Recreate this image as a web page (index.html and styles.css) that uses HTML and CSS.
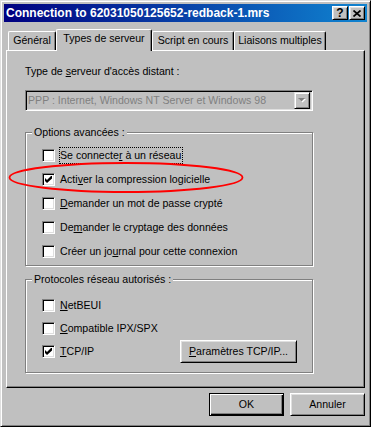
FILE: index.html
```html
<!DOCTYPE html>
<html>
<head>
  <title>Connection to 62031050125652-redback-1.mrs</title>
  <link rel="stylesheet" href="styles.css">
</head>
<body>
  <div class="window">
    <div class="titlebar">
      <span class="title">Connection to 62031050125652-redback-1.mrs</span>
      <div class="caption-btns">
        <div class="cap-btn help">?</div>
        <div class="cap-btn">
          <svg width="8" height="7" viewBox="0 0 8 7"><path d="M0.5 0.5 L7.5 6.5 M7.5 0.5 L0.5 6.5" stroke="#000" stroke-width="1.7"/></svg>
        </div>
      </div>
    </div>

    <div class="body">
      <div class="tabs">
        <div class="tab t1">Général</div>
        <div class="tab active">Types de serveur</div>
        <div class="tab t3">Script en cours</div>
        <div class="tab t4">Liaisons multiples</div>
      </div>

      <div class="panel">
        <div class="field-label">Type de <u>s</u>erveur d'accès distant :</div>
        <div class="combo">
          <span class="combo-text">PPP : Internet, Windows NT Server et Windows 98</span>
          <div class="combo-btn">
            <svg width="8" height="5" viewBox="0 0 8 5"><path d="M1 1 H8 L4.5 4.5 Z" fill="#fff"/><path d="M0 0 H7 L3.5 3.5 Z" fill="#808080"/></svg>
          </div>
        </div>

        <div class="group g1">
          <div class="legend">Options avancées :</div>
          <div class="check"><span class="box"></span><span class="label focus">Se connecte<u>r</u> à un réseau</span></div>
          <div class="check"><span class="box"><svg width="7" height="7" viewBox="0 0 7 7"><path d="M0 2 L2 4 L6 0 L7 0 L7 2.6 L2 7 L0 5 Z" fill="#000"/></svg></span><span class="label">Acti<u>v</u>er la compression logicielle</span></div>
          <div class="check"><span class="box"></span><span class="label"><u>D</u>emander un mot de passe crypté</span></div>
          <div class="check"><span class="box"></span><span class="label">De<u>m</u>ander le cryptage des données</span></div>
          <div class="check"><span class="box"></span><span class="label">Créer un jo<u>u</u>rnal pour cette connexion</span></div>
        </div>

        <div class="group g2">
          <div class="legend">Protocoles réseau autorisés :</div>
          <div class="check"><span class="box"></span><span class="label"><u>N</u>etBEUI</span></div>
          <div class="check"><span class="box"></span><span class="label"><u>C</u>ompatible IPX/SPX</span></div>
          <div class="check"><span class="box"><svg width="7" height="7" viewBox="0 0 7 7"><path d="M0 2 L2 4 L6 0 L7 0 L7 2.6 L2 7 L0 5 Z" fill="#000"/></svg></span><span class="label"><u>T</u>CP/IP</span>
            <div class="btn tcp"><u>P</u>aramètres TCP/IP...</div>
          </div>
        </div>
      </div>

      <div class="actions">
        <div class="btn default">OK</div>
        <div class="btn">Annuler</div>
      </div>
    </div>

    <svg class="mark" width="371" height="427" viewBox="0 0 371 427">
      <ellipse cx="126" cy="177.5" rx="116.5" ry="14.5" fill="none" stroke="#f00" stroke-width="1.8"/>
    </svg>
  </div>
</body>
</html>
```

FILE: styles.css
```css
* {
  box-sizing: border-box;
}
body {
  margin: 0;
  background: #c0c0c0;
  color: #000;
  font-family: "Liberation Sans", Arial, sans-serif;
  font-size: 10.6px;
  line-height: 13px;
}
u {
  text-underline-offset: 1px;
}
.window {
  position: relative;
  width: 371px;
  height: 427px;
  padding: 3px;
  background: #c0c0c0;
  border: 1px solid;
  border-color: #dfdfdf #000 #000 #dfdfdf;
  box-shadow: inset 1px 1px #fff, inset -1px -1px #808080;
}
.titlebar {
  height: 18px;
  display: flex;
  align-items: center;
  justify-content: space-between;
  padding: 0 2px;
  background: linear-gradient(to right, #000080, #1084d0);
  color: #fff;
}
.title {
  font-weight: bold;
  font-size: 12px;
}
.caption-btns {
  display: flex;
  gap: 1px;
}
.cap-btn {
  width: 16px;
  height: 14px;
  display: flex;
  align-items: center;
  justify-content: center;
  background: #c0c0c0;
  border: 1px solid;
  border-color: #fff #000 #000 #fff;
  box-shadow: inset 1px 1px #dfdfdf, inset -1px -1px #808080;
  color: #000;
}
.cap-btn.help {
  font-weight: bold;
  font-size: 12px;
}

.body {
  padding: 0 2px;
}
.tabs {
  display: flex;
  align-items: flex-end;
  height: 21px;
  margin-top: 7px;
  padding-left: 2px;
}
.tab {
  height: 19px;
  display: flex;
  justify-content: center;
  padding-top: 2px;
  border: 1px solid;
  border-bottom: 0;
  border-color: #fff #000 #000 #fff;
  border-radius: 2px 2px 0 0;
  box-shadow: inset -1px 0 #808080;
  background: #c0c0c0;
}
.tab.t1 { width: 48px; }
.tab.t3 { width: 82px; }
.tab.t4 { width: 92px; }
.tab.active {
  position: relative;
  z-index: 1;
  width: 96px;
  height: 22px;
  margin-bottom: -1px;
}

.panel {
  height: 338px;
  padding: 14px 0 0 18px;
  border: 1px solid;
  border-color: #fff #000 #000 #fff;
  box-shadow: inset -1px -1px #808080;
}
.combo {
  width: 288px;
  height: 21px;
  margin-top: 12px;
  padding: 2px;
  display: flex;
  align-items: center;
  justify-content: space-between;
  border: 1px solid;
  border-color: #808080 #fff #fff #808080;
  box-shadow: inset 1px 1px #000, inset -1px -1px #dfdfdf;
  color: #808080;
}
.combo-btn {
  width: 16px;
  height: 17px;
  display: flex;
  align-items: center;
  justify-content: center;
  border: 1px solid;
  border-color: #dfdfdf #000 #000 #dfdfdf;
  box-shadow: inset 1px 1px #fff, inset -1px -1px #808080;
}

.group {
  width: 288px;
  border: 1px solid #808080;
  box-shadow: inset 1px 1px #fff, 1px 1px #fff;
}
.g1 {
  margin-top: 21px;
  padding-bottom: 2px;
}
.g2 {
  margin-top: 13px;
  padding-bottom: 9px;
}
.legend {
  display: table;
  margin: -7px 0 0 6px;
  padding: 0 2px;
  background: #c0c0c0;
}
.g1 .legend { margin-bottom: 4px; }
.g2 .legend { margin-bottom: 8px; }
.check {
  display: flex;
  align-items: center;
  height: 24px;
  margin-left: 16px;
  padding-right: 15px;
}
.g2 .check {
  height: 23px;
}
.box {
  flex: none;
  width: 13px;
  height: 13px;
  display: flex;
  align-items: center;
  justify-content: center;
  margin-right: 5px;
  background: #fff;
  border: 1px solid;
  border-color: #808080 #fff #fff #808080;
  box-shadow: inset 1px 1px #000, inset -1px -1px #dfdfdf;
}
.label {
  padding: 1px 1px 1px 0;
}
.label.focus {
  outline: 1px dotted #000;
}

.btn {
  height: 23px;
  display: flex;
  align-items: center;
  justify-content: center;
  background: #c0c0c0;
  border: 1px solid;
  border-color: #fff #000 #000 #fff;
  box-shadow: inset 1px 1px #dfdfdf, inset -1px -1px #808080;
}
.btn.tcp {
  width: 117px;
  margin-left: auto;
}
.actions {
  display: flex;
  justify-content: flex-end;
  gap: 6px;
  margin-top: 5px;
}
.actions .btn {
  width: 75px;
}
.btn.default {
  border-color: #000;
  box-shadow: inset 1px 1px #fff, inset -1px -1px #000, inset -2px -2px #808080;
}

.mark {
  position: absolute;
  left: -1px;
  top: -1px;
  pointer-events: none;
}
```
